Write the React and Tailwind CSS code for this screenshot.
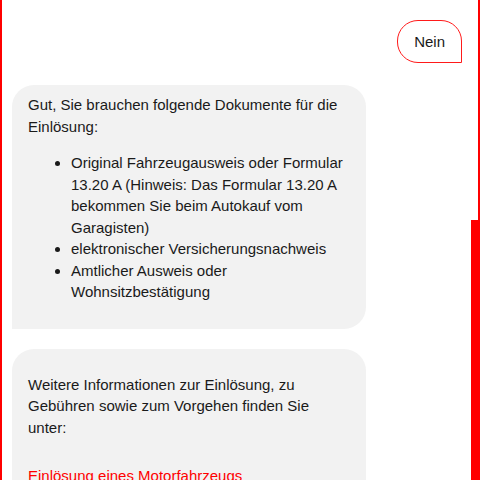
export default function App() {
  return (
    <div className="relative w-[480px] h-[480px] overflow-hidden bg-white border-l-2 border-r-2 border-[#ff0000] font-['Liberation_Sans',Arial,sans-serif] text-[15px] leading-[21.5px] text-[#1a1a1a]">
      {/* scrollbar thumb */}
      <div className="absolute right-0 top-[220px] w-[7px] h-[260px] bg-[#ff0000]" />

      <div className="flex flex-col">
        <div className="flex justify-end pt-[20px] pr-[16px]">
          <div className="h-[43px] px-[16px] flex items-center border border-[#ff1a1a] rounded-[21px] rounded-br-none bg-white">
            Nein
          </div>
        </div>

        <div className="mt-[22px] ml-[10px] w-[354px] bg-[#f2f2f2] rounded-[22px] rounded-bl-none px-[16px] pt-[9px] pb-[26px]">
          <p>Gut, Sie brauchen folgende Dokumente für die Einlösung:</p>
          <ul className="mt-[15px] list-disc pl-[43px]">
            <li>Original Fahrzeugausweis oder Formular 13.20 A (Hinweis: Das Formular 13.20 A bekommen Sie beim Autokauf vom Garagisten)</li>
            <li>elektronischer Versicherungsnachweis</li>
            <li>Amtlicher Ausweis oder Wohnsitzbestätigung</li>
          </ul>
        </div>

        <div className="mt-[20px] ml-[10px] w-[354px] bg-[#f2f2f2] rounded-[22px] rounded-bl-none px-[16px] pt-[25px] pb-[26px]">
          <p>Weitere Informationen zur Einlösung, zu Gebühren sowie zum Vorgehen finden Sie unter:</p>
          <p className="mt-[27px]">
            <a className="text-[#ff0000]">Einlösung eines Motorfahrzeugs</a>
          </p>
        </div>
      </div>
    </div>
  );
}
